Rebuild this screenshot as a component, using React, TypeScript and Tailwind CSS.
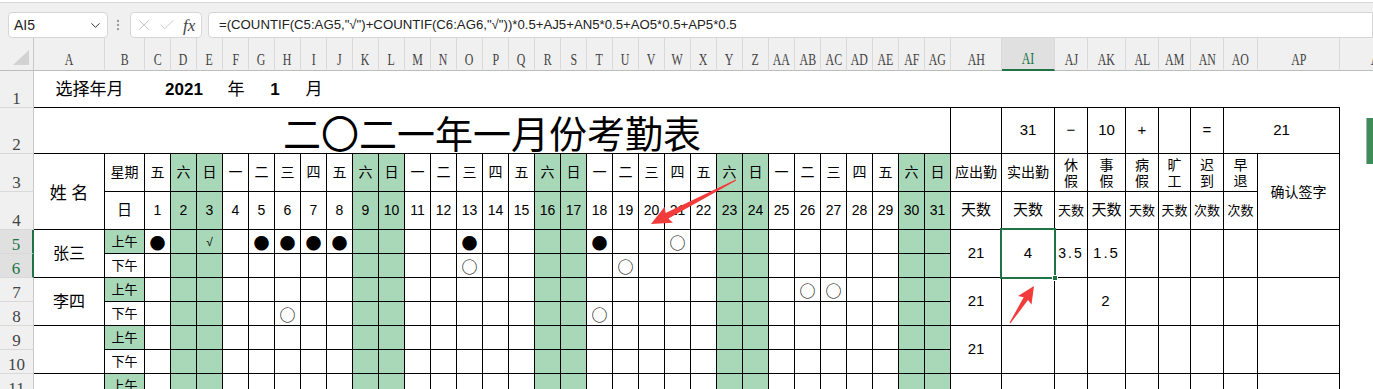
import { ChevronDown, EllipsisVertical, X, Check } from 'lucide-react';
import type { ReactNode } from 'react';

const DAYS = Array.from({ length: 31 }, (_, i) => i + 1);
const WEEK = ['日', '一', '二', '三', '四', '五', '六'];
const isWeekend = (d: number) => d % 7 === 2 || d % 7 === 3;
const colName = (i: number) => (i < 26 ? String.fromCharCode(65 + i) : 'A' + String.fromCharCode(39 + i));

const BORDER = 'border-r border-b border-black';
const GREEN = 'bg-[#a9d8b8]';

type Marks = Record<number, string>;

interface Group {
  name: string;
  am: Marks;
  pm: Marks;
  ah?: string;
  ai?: string;
  aj?: string;
  ak?: string;
}

const groups: Group[] = [
  {
    name: '张三',
    am: { 1: '●', 3: '√', 5: '●', 6: '●', 7: '●', 8: '●', 13: '●', 18: '●', 21: '○' },
    pm: { 13: '○', 19: '○' },
    ah: '21',
    ai: '4',
    aj: '3.5',
    ak: '1.5',
  },
  { name: '李四', am: { 26: '○', 27: '○' }, pm: { 6: '○', 18: '○' }, ah: '21', ak: '2' },
  { name: '', am: {}, pm: {}, ah: '21' },
  { name: '', am: {}, pm: {} },
];

const leaveTop = [
  ['休', '假'],
  ['事', '假'],
  ['病', '假'],
  ['旷', '工'],
  ['迟', '到'],
  ['早', '退'],
];
const leaveBottom = [
  { t: '天数', cls: 'text-[13px]' },
  { t: '天数', cls: 'text-[15px]' },
  { t: '天数', cls: 'text-[13px]' },
  { t: '天数', cls: 'text-[13px]' },
  { t: '次数', cls: 'text-[13px]' },
  { t: '次数', cls: 'text-[13px]' },
];

function Cell({
  c,
  r,
  cs = 1,
  rs = 1,
  className = '',
  children,
}: {
  c: number;
  r: number;
  cs?: number;
  rs?: number;
  className?: string;
  children?: ReactNode;
}) {
  return (
    <div
      style={{ gridColumn: `${c} / span ${cs}`, gridRow: `${r} / span ${rs}` }}
      className={`flex items-center justify-center ${className}`}
    >
      {children}
    </div>
  );
}

function Mark({ v }: { v?: string }) {
  if (!v) return null;
  if (v === '√') return <span className="text-[12px] leading-none">√</span>;
  return <span className="text-[16px] leading-none font-['Noto_Sans_CJK_SC',sans-serif]">{v}</span>;
}

// tapered arrow, thin at the tail and widening into the head
function arrow(tx: number, ty: number, px: number, py: number, head: number, hw: number, w0: number, w1: number) {
  const dx = px - tx;
  const dy = py - ty;
  const L = Math.hypot(dx, dy);
  const ux = dx / L;
  const uy = dy / L;
  const nx = -uy;
  const ny = ux;
  const bx = px - ux * head;
  const by = py - uy * head;
  const pts = [
    [tx + nx * w0, ty + ny * w0],
    [bx + nx * w1, by + ny * w1],
    [bx + nx * hw - ux * 2, by + ny * hw - uy * 2],
    [px, py],
    [bx - nx * hw - ux * 2, by - ny * hw - uy * 2],
    [bx - nx * w1, by - ny * w1],
    [tx - nx * w0, ty - ny * w0],
  ];
  return pts.map((p) => p.map((v) => v.toFixed(1)).join(',')).join(' ');
}

function FormulaBar() {
  return (
    <div className="h-[38px] bg-[#f0f0f0]">
      <div className="h-[3px] bg-white border-b border-[#d6d6d6]" />
      <div className="flex items-center mt-[9px] h-[26px]">
        <div className="ml-[8px] w-[100px] h-[26px] bg-white border border-[#d6d6d6] rounded-[4px] flex items-center justify-between pl-[5px] pr-[4px]">
          <span className="text-[14px] text-[#222]">AI5</span>
          <ChevronDown size={15} strokeWidth={1.6} className="text-[#333]" />
        </div>
        <EllipsisVertical size={14} strokeWidth={2} className="ml-[3px] text-[#9a9a9a]" />
        <div className="ml-[5px] w-[72px] h-[26px] bg-white border border-[#d6d6d6] rounded-[4px] flex items-center pl-[4px]">
          <X size={18} strokeWidth={1.2} className="text-[#c2c2c2]" />
          <Check size={18} strokeWidth={1.2} className="ml-[5px] text-[#c2c2c2]" />
          <span className="ml-[7px] text-[17px] italic text-[#444] font-['Liberation_Serif',serif] leading-none">fx</span>
        </div>
        <div className="ml-[6px] flex-1 h-[26px] bg-white border border-[#d6d6d6] rounded-l-[4px] flex items-center pl-[10px]">
          <span className="text-[13.2px] text-[#222] whitespace-nowrap">
            =(COUNTIF(C5:AG5,"√")+COUNTIF(C6:AG6,"√"))*0.5+AJ5+AN5*0.5+AO5*0.5+AP5*0.5
          </span>
        </div>
      </div>
    </div>
  );
}

export default function App() {
  const letters = Array.from({ length: 43 }, (_, i) => colName(i));

  return (
    <div className="relative w-[1373px] h-[389px] overflow-hidden bg-white font-['Liberation_Sans','Noto_Sans_CJK_SC',sans-serif] text-black">
      <FormulaBar />

      <div className="grid grid-cols-[34px_71px_40px_repeat(31,26px)_51px_53px_33px_38px_33px_32px_33px_34px_82px_80px] grid-rows-[33px_37px_46px_38px_38px_repeat(8,24px)]">
        {/* corner */}
        <Cell c={1} r={1} className="bg-[#f0f0f0] border-r border-b border-r-[#c8c8c8] border-b-[#bdbdbd] relative">
          <svg width="34" height="33" className="absolute left-0 top-0">
            <polygon points="13,27 29,12 29,27" fill="#d2d2d2" />
          </svg>
        </Cell>

        {/* column headers */}
        {letters.map((l, i) => {
          const sel = l === 'AI';
          return (
            <Cell
              key={l}
              c={i + 2}
              r={1}
              className={`!items-end pb-[2px] border-r border-r-[#d9d9d9] ${
                sel ? 'bg-[#e0e0e0] border-b-2 border-b-[#217346] text-[#217346]' : 'bg-[#f0f0f0] border-b border-b-[#bdbdbd] text-[#444]'
              }`}
            >
              <span className="inline-block scale-x-[0.7] text-[17px] leading-none font-['Liberation_Serif',serif] whitespace-nowrap">
                {l}
              </span>
            </Cell>
          );
        })}

        {/* row headers */}
        {Array.from({ length: 12 }, (_, i) => i + 1).map((n) => {
          const sel = n === 5 || n === 6;
          return (
            <Cell
              key={n}
              c={1}
              r={n + 1}
              className={`!items-end border-b border-b-[#d9d9d9] ${
                sel ? 'bg-[#e0e0e0] text-[#217346] border-r-2 border-r-[#217346]' : 'bg-[#f0f0f0] text-[#444] border-r border-r-[#c8c8c8]'
              }`}
            >
              <span className="text-[17px] leading-none font-['Liberation_Serif',serif]">{n}</span>
            </Cell>
          );
        })}

        {/* row 1 */}
        <Cell c={2} r={2} cs={42} className="border-b border-black" />
        <Cell c={2} r={2} cs={2} className="text-[17px]">
          选择年月
        </Cell>
        <Cell c={4} r={2} cs={3} className="text-[17px] font-bold">
          2021
        </Cell>
        <Cell c={7} r={2} className="text-[17px]">
          年
        </Cell>
        <Cell c={8} r={2} cs={2} className="text-[17px] font-bold">
          1
        </Cell>
        <Cell c={10} r={2} className="text-[17px]">
          月
        </Cell>

        {/* row 2 */}
        <Cell c={2} r={3} cs={33} className={`${BORDER} pt-[3px]`}>
          <span className="text-[38px] leading-none font-['Noto_Sans_CJK_SC',sans-serif] whitespace-nowrap">二〇二一年一月份考勤表</span>
        </Cell>
        <Cell c={35} r={3} className={BORDER} />
        <Cell c={36} r={3} className={`${BORDER} text-[15px]`}>
          31
        </Cell>
        <Cell c={37} r={3} className={`${BORDER} text-[15px]`}>
          −
        </Cell>
        <Cell c={38} r={3} className={`${BORDER} text-[15px]`}>
          10
        </Cell>
        <Cell c={39} r={3} className={`${BORDER} text-[15px]`}>
          +
        </Cell>
        <Cell c={40} r={3} className={BORDER} />
        <Cell c={41} r={3} className={`${BORDER} text-[15px]`}>
          =
        </Cell>
        <Cell c={42} r={3} cs={2} className={`${BORDER} text-[15px]`}>
          21
        </Cell>

        {/* rows 3-4 */}
        <Cell c={2} r={4} rs={2} className={`${BORDER} text-[17px] pt-[4px]`}>
          姓 名
        </Cell>
        <Cell c={3} r={4} className={`${BORDER} text-[14px]`}>
          星期
        </Cell>
        <Cell c={3} r={5} className={`${BORDER} text-[15px]`}>
          日
        </Cell>
        {DAYS.map((d) => (
          <Cell key={`w${d}`} c={3 + d} r={4} className={`${BORDER} text-[14px] ${isWeekend(d) ? GREEN : ''}`}>
            {WEEK[(d + 4) % 7]}
          </Cell>
        ))}
        {DAYS.map((d) => (
          <Cell key={`d${d}`} c={3 + d} r={5} className={`${BORDER} text-[14px] ${isWeekend(d) ? GREEN : ''}`}>
            {d}
          </Cell>
        ))}
        <Cell c={35} r={4} className={`${BORDER} text-[14px]`}>
          应出勤
        </Cell>
        <Cell c={35} r={5} className={`${BORDER} text-[15px]`}>
          天数
        </Cell>
        <Cell c={36} r={4} className={`${BORDER} text-[14px]`}>
          实出勤
        </Cell>
        <Cell c={36} r={5} className={`${BORDER} text-[15px]`}>
          天数
        </Cell>
        {leaveTop.map((pair, i) => (
          <Cell key={`lt${i}`} c={37 + i} r={4} className={`${BORDER} !flex-col text-[14px] leading-[16px]`}>
            <span>{pair[0]}</span>
            <span>{pair[1]}</span>
          </Cell>
        ))}
        {leaveBottom.map((b, i) => (
          <Cell key={`lb${i}`} c={37 + i} r={5} className={`${BORDER} ${b.cls} whitespace-nowrap`}>
            {b.t}
          </Cell>
        ))}
        <Cell c={43} r={4} rs={2} className={`${BORDER} text-[14px] pt-[2px]`}>
          确认签字
        </Cell>

        {/* people */}
        {groups.map((g, gi) => {
          const r = 6 + gi * 2;
          return [
            <Cell key={`n${gi}`} c={2} r={r} rs={2} className={`${BORDER} text-[16px]`}>
              {g.name}
            </Cell>,
            <Cell key={`am${gi}`} c={3} r={r} className={`${BORDER} ${GREEN} text-[13px]`}>
              上午
            </Cell>,
            <Cell key={`pm${gi}`} c={3} r={r + 1} className={`${BORDER} text-[13px]`}>
              下午
            </Cell>,
            ...DAYS.map((d) => (
              <Cell key={`a${gi}-${d}`} c={3 + d} r={r} className={`${BORDER} ${isWeekend(d) ? GREEN : ''}`}>
                <Mark v={g.am[d]} />
              </Cell>
            )),
            ...DAYS.map((d) => (
              <Cell key={`p${gi}-${d}`} c={3 + d} r={r + 1} className={`${BORDER} ${isWeekend(d) ? GREEN : ''}`}>
                <Mark v={g.pm[d]} />
              </Cell>
            )),
            <Cell key={`ah${gi}`} c={35} r={r} rs={2} className={`${BORDER} text-[15px]`}>
              {g.ah}
            </Cell>,
            <Cell key={`ai${gi}`} c={36} r={r} rs={2} className={`${BORDER} text-[15px] relative`}>
              {g.ai}
              {gi === 0 && (
                <div className="absolute z-10 left-[-2px] top-[-2px] right-[-2px] bottom-[-2px] border-2 border-[#217346]">
                  <div className="absolute right-[-4px] bottom-[-4px] w-[6px] h-[6px] bg-[#217346] border border-white" />
                </div>
              )}
            </Cell>,
            <Cell key={`aj${gi}`} c={37} r={r} rs={2} className={`${BORDER} text-[14px] tracking-[2px] whitespace-nowrap`}>
              {g.aj}
            </Cell>,
            <Cell key={`ak${gi}`} c={38} r={r} rs={2} className={`${BORDER} text-[15px] tracking-[2px] whitespace-nowrap`}>
              {g.ak}
            </Cell>,
            ...[39, 40, 41, 42, 43].map((c) => <Cell key={`x${gi}-${c}`} c={c} r={r} rs={2} className={BORDER} />),
          ];
        })}
      </div>

      {/* annotation arrows */}
      <svg width="1373" height="389" className="absolute left-0 top-0 pointer-events-none">
        <polygon points={arrow(736, 180, 651, 224, 18, 9, 0.6, 3)} fill="#f23b3b" />
        <polygon points={arrow(1010, 323, 1034, 286, 15, 8, 0.6, 2.6)} fill="#f23b3b" />
      </svg>

      {/* side pane tab */}
      <div className="absolute left-[1366px] top-[118px] w-[8px] h-[46px] bg-[#3f8c5a] border-l border-[#9bb8a4]" />
    </div>
  );
}
